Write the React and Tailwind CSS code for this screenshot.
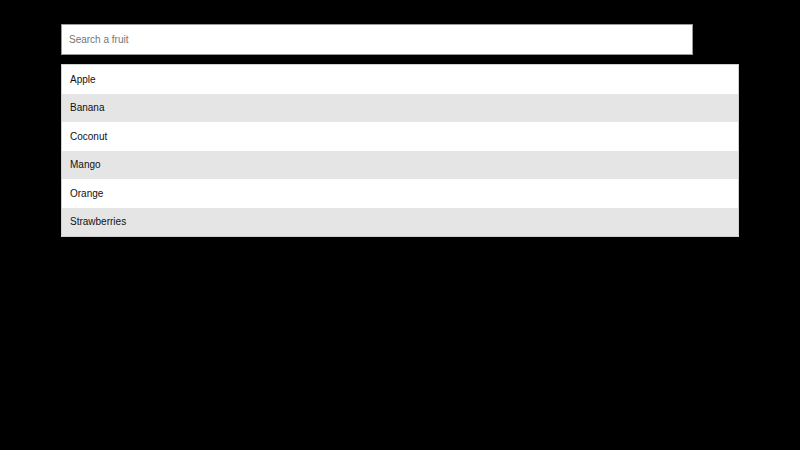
import { useState } from "react";

const fruits = ["Apple", "Banana", "Coconut", "Mango", "Orange", "Strawberries"];

const App = () => {
  const [query, setQuery] = useState("");

  const shown = fruits.filter((f) => f.toLowerCase().includes(query.toLowerCase()));

  return (
    <div className="min-h-screen w-full bg-black px-[61px] pt-[24px] font-['Liberation_Sans',Arial,sans-serif]">
      {/* Search box */}
      <input
        type="text"
        value={query}
        onChange={(e) => setQuery(e.target.value)}
        placeholder="Search a fruit"
        className="block h-[31px] w-[632px] border border-[#9a9a9a] bg-white px-[7px] text-[10px] text-black placeholder:text-[#757575] outline-none"
      />

      {/* Fruit list */}
      <ul className="mt-[9px] border border-[#cfcfcf]">
        {shown.map((fruit, i) => (
          <li
            key={fruit}
            className={`flex h-[28.5px] items-center px-[8px] text-[10px] text-[#111] ${
              i % 2 === 1 ? "bg-[#e5e5e5]" : "bg-white"
            }`}
          >
            {fruit}
          </li>
        ))}
      </ul>
    </div>
  );
};

export default App;
